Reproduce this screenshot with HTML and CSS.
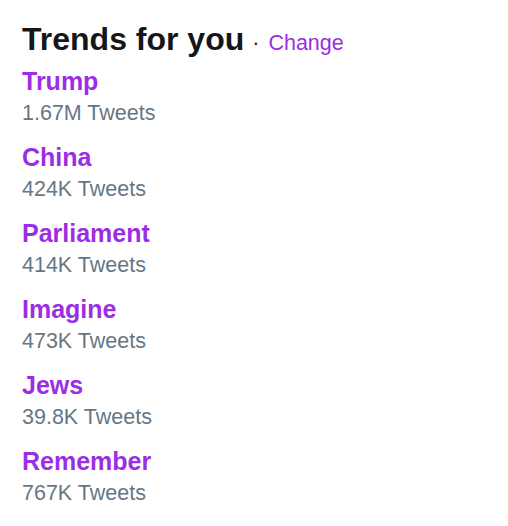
FILE: index.html
```html
<!DOCTYPE html>
<html>
<head>
<meta charset="utf-8">
<link rel="stylesheet" href="styles.css">
</head>
<body>
<div class="trends">
  <div class="header">
    <h2 class="title">Trends for you</h2>
    <span class="dot">·</span>
    <a class="change">Change</a>
  </div>
  <ul class="list">
    <li class="item"><div class="name">Trump</div><div class="count">1.67M Tweets</div></li>
    <li class="item"><div class="name">China</div><div class="count">424K Tweets</div></li>
    <li class="item"><div class="name">Parliament</div><div class="count">414K Tweets</div></li>
    <li class="item"><div class="name">Imagine</div><div class="count">473K Tweets</div></li>
    <li class="item"><div class="name">Jews</div><div class="count">39.8K Tweets</div></li>
    <li class="item"><div class="name">Remember</div><div class="count">767K Tweets</div></li>
  </ul>
</div>
</body>
</html>
```
FILE: styles.css
```css
html, body {
  margin: 0;
  padding: 0;
  background: #ffffff;
}
body {
  font-family: "Liberation Sans", Arial, sans-serif;
}
.trends {
  padding: 21px 22px 0 22px;
}
.header {
  display: flex;
  align-items: baseline;
  height: 36px;
}
.title {
  margin: 0;
  font-size: 32px;
  line-height: 36px;
  font-weight: 700;
  color: #14171a;
}
.dot {
  font-size: 21.5px;
  color: #14171a;
  margin: 0 9px 0 8px;
}
.change {
  font-size: 21.5px;
  color: #9b2ee4;
  text-decoration: none;
}
.list {
  list-style: none;
  margin: 9px 0 0 0;
  padding: 0;
  display: flex;
  flex-direction: column;
  gap: 14px;
}
.name {
  font-size: 25px;
  line-height: 30px;
  font-weight: 700;
  color: #9b2ee4;
}
.count {
  font-size: 21.5px;
  line-height: 30px;
  padding-top: 2px;
  color: #657786;
}
```
